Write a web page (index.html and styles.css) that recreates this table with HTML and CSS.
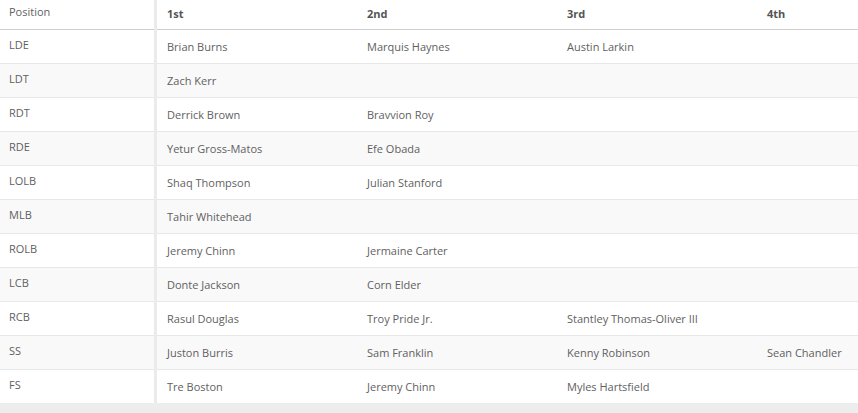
FILE: index.html
```html
<!DOCTYPE html>
<html>
<head>
<meta charset="utf-8">
<link rel="stylesheet" href="styles.css">
</head>
<body>
<div class="chart">
  <div class="fixed">
    <div class="row head"><div class="cell">Position</div></div>
    <div class="row"><div class="cell">LDE</div></div>
    <div class="row alt"><div class="cell">LDT</div></div>
    <div class="row"><div class="cell">RDT</div></div>
    <div class="row alt"><div class="cell">RDE</div></div>
    <div class="row"><div class="cell">LOLB</div></div>
    <div class="row alt"><div class="cell">MLB</div></div>
    <div class="row"><div class="cell">ROLB</div></div>
    <div class="row alt"><div class="cell">LCB</div></div>
    <div class="row"><div class="cell">RCB</div></div>
    <div class="row alt"><div class="cell">SS</div></div>
    <div class="row"><div class="cell">FS</div></div>
  </div>
  <div class="scroll">
    <div class="row head"><div class="cell">1st</div><div class="cell">2nd</div><div class="cell">3rd</div><div class="cell">4th</div></div>
    <div class="row"><div class="cell">Brian Burns</div><div class="cell">Marquis Haynes</div><div class="cell">Austin Larkin</div><div class="cell"></div></div>
    <div class="row alt"><div class="cell">Zach Kerr</div><div class="cell"></div><div class="cell"></div><div class="cell"></div></div>
    <div class="row"><div class="cell">Derrick Brown</div><div class="cell">Bravvion Roy</div><div class="cell"></div><div class="cell"></div></div>
    <div class="row alt"><div class="cell">Yetur Gross-Matos</div><div class="cell">Efe Obada</div><div class="cell"></div><div class="cell"></div></div>
    <div class="row"><div class="cell">Shaq Thompson</div><div class="cell">Julian Stanford</div><div class="cell"></div><div class="cell"></div></div>
    <div class="row alt"><div class="cell">Tahir Whitehead</div><div class="cell"></div><div class="cell"></div><div class="cell"></div></div>
    <div class="row"><div class="cell">Jeremy Chinn</div><div class="cell">Jermaine Carter</div><div class="cell"></div><div class="cell"></div></div>
    <div class="row alt"><div class="cell">Donte Jackson</div><div class="cell">Corn Elder</div><div class="cell"></div><div class="cell"></div></div>
    <div class="row"><div class="cell">Rasul Douglas</div><div class="cell">Troy Pride Jr.</div><div class="cell">Stantley Thomas-Oliver III</div><div class="cell"></div></div>
    <div class="row alt"><div class="cell">Juston Burris</div><div class="cell">Sam Franklin</div><div class="cell">Kenny Robinson</div><div class="cell">Sean Chandler</div></div>
    <div class="row"><div class="cell">Tre Boston</div><div class="cell">Jeremy Chinn</div><div class="cell">Myles Hartsfield</div><div class="cell"></div></div>
  </div>
</div>
</body>
</html>
```

FILE: styles.css
```css
html, body {
  margin: 0;
  padding: 0;
  background: #ededed;
  width: 858px;
  height: 413px;
  overflow: hidden;
}
body {
  font-family: "Open Sans", "Liberation Sans", sans-serif;
  font-size: 11px;
  color: #5f5f5f;
}
.chart {
  display: flex;
  background: #fff;
  width: 858px;
}
.fixed {
  width: 154px;
  flex: none;
  border-right: 3px solid #ebebeb;
}
.scroll {
  flex: 1;
  overflow: hidden;
}
.row {
  display: flex;
  height: 33px;
  border-bottom: 1px solid #e8e8e8;
  background: #fff;
}
.row:last-child {
  border-bottom: none;
  height: 33px;
}
.row.alt {
  background: #f9f9f9;
}
.row.head {
  height: 29px;
  border-bottom: 1px solid #cfcfcf;
}
.cell {
  flex: none;
  width: 200px;
  box-sizing: border-box;
  padding-left: 10px;
  display: flex;
  align-items: center;
  white-space: nowrap;
}
.fixed .cell {
  width: 154px;
  padding-left: 9px;
  padding-bottom: 4px;
}
.scroll .head .cell {
  font-weight: 700;
  color: #555;
  padding-bottom: 3px;
}
.fixed .head .cell {
  padding-bottom: 7px;
}
```
